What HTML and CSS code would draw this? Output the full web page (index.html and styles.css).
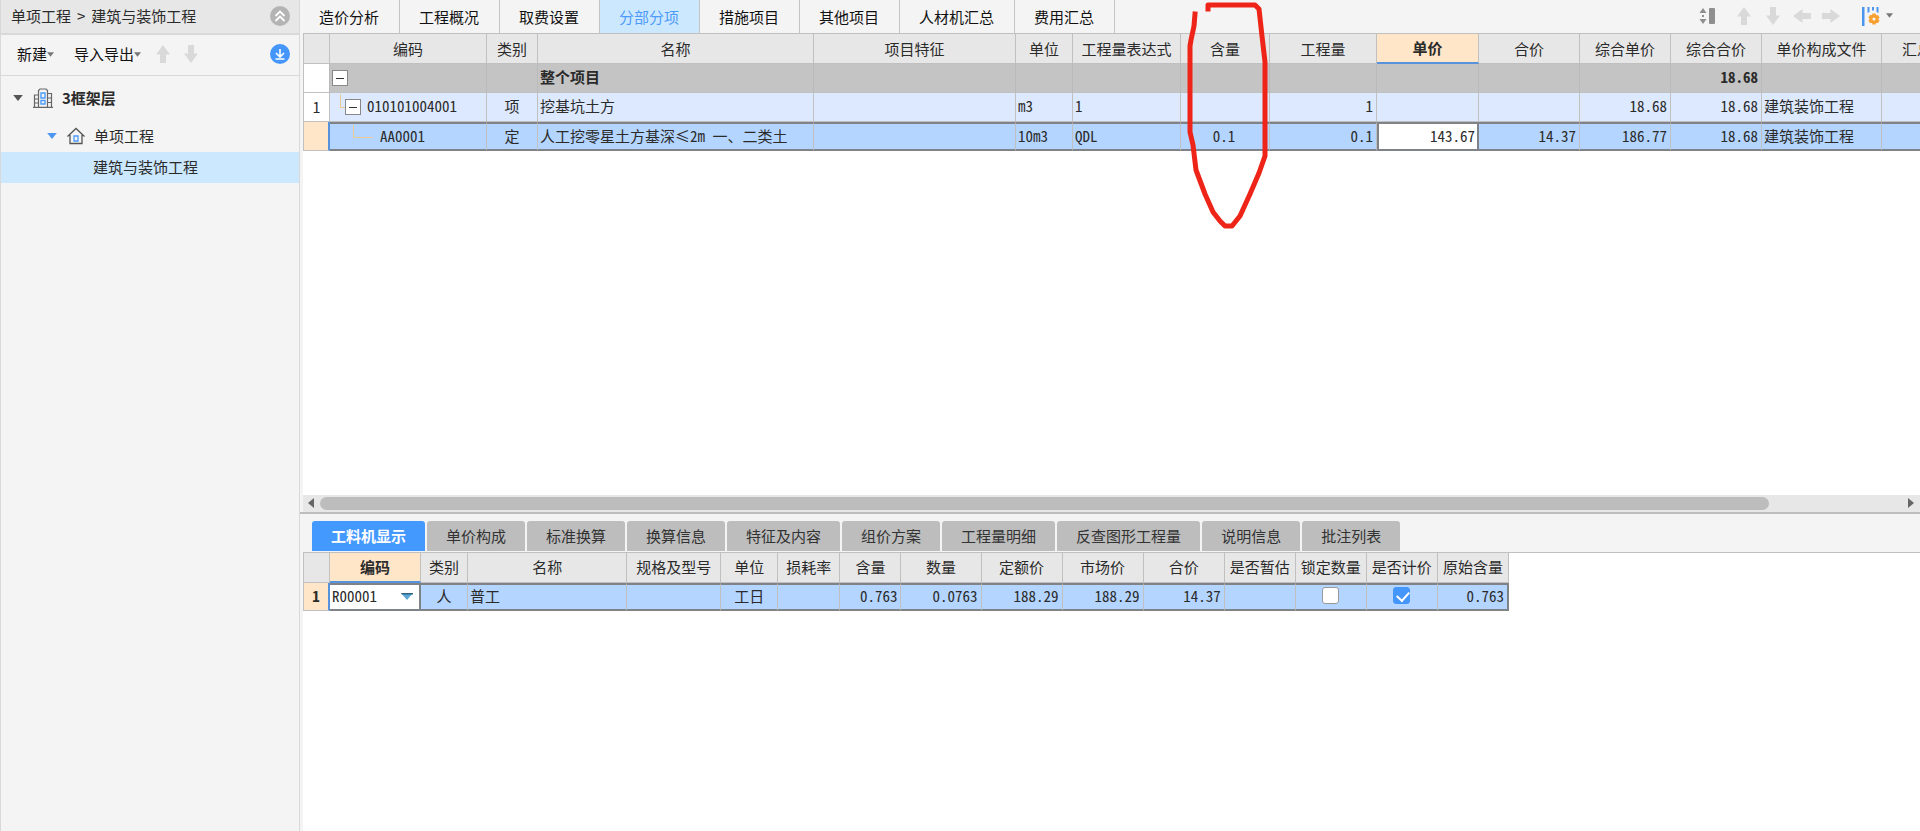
FILE: index.html
```html
<!DOCTYPE html>
<html lang="zh-CN">
<head>
<meta charset="utf-8">
<title>分部分项</title>
<link rel="stylesheet" href="styles.css">
</head>
<body>
<svg class="defs" aria-hidden="true">
  <symbol id="arrow" viewBox="0 0 18 20"><path d="M9 1 L16 10.500 H12 V19 H6 V10.500 H2 Z"/></symbol>
  <symbol id="caret" viewBox="0 0 8 5"><path d="M0 0 H8 L4 5 Z"/></symbol>
</svg>
<div class="app">
  <aside class="side">
    <header class="crumbs">
      <div class="trail"><span>单项工程</span><span>&gt;</span><span>建筑与装饰工程</span></div>
      <button class="plain" aria-label="收起">
        <svg width="20" height="20" viewBox="0 0 20 20"><circle cx="10" cy="10" r="10" fill="#b4b4b4"/><path d="M5.500 10 L10 5.500 L14.500 10 M5.500 15 L10 10.500 L14.500 15" fill="none" stroke="#fff" stroke-width="1.800"/></svg>
      </button>
    </header>
    <div class="tools">
      <button class="plain menu">新建<svg class="tri" width="7" height="5"><use href="#caret"/></svg></button>
      <button class="plain menu">导入导出<svg class="tri" width="7" height="5"><use href="#caret"/></svg></button>
      <button class="plain pale" aria-label="上移"><svg width="18" height="20"><use href="#arrow"/></svg></button>
      <button class="plain pale" aria-label="下移"><svg class="down" width="18" height="20"><use href="#arrow"/></svg></button>
      <button class="plain push" aria-label="下载">
        <svg width="20" height="20" viewBox="0 0 20 20"><circle cx="10" cy="10" r="10" fill="#4496fb"/><path d="M10 5 V13 M6 9 L10 13 L14 9 M5.500 15 H14.500" fill="none" stroke="#fff" stroke-width="1.600"/></svg>
      </button>
    </div>
    <ul class="tree">
      <li class="node root">
        <svg class="dark" width="10" height="6" viewBox="0 0 8 5"><path d="M0 0 H8 L4 5 Z"/></svg>
        <svg width="20" height="20" viewBox="0 0 20 20" fill="none" stroke="#666" stroke-width="1.200"><path d="M0 19.300 H20 M5.500 19 V2.500 L7 1 H13 L14.500 2.500 V19 M5.500 7 H1.500 V19 M14.500 5.500 H18.500 V19 M1.500 11 H5.500 M1.500 15 H5.500 M14.500 10 H18.500 M14.500 14.500 H18.500"/><path d="M8 5 H12 V10 H8 Z M8 12.500 H12 V16 H8 Z" stroke="#4c9bf8" stroke-width="1.400"/></svg>
        <b>3框架层</b>
      </li>
      <li class="node child">
        <svg class="blue" width="10" height="6" viewBox="0 0 8 5"><path d="M0 0 H8 L4 5 Z"/></svg>
        <svg width="18" height="18" viewBox="0 0 18 18" fill="none" stroke="#555" stroke-width="1.300"><path d="M0.500 9.500 L9 1.500 L17.500 9.500 M3 8 V16.500 H15 V8"/><path d="M7 9 H11 V14 H7 Z" stroke="#4c9bf8"/></svg>
        <span>单项工程</span>
      </li>
      <li class="node leaf">建筑与装饰工程</li>
    </ul>
  </aside>

  <main class="main">
    <section class="upper">
      <div class="bar">
        <nav class="tabs">
          <button class="tab">造价分析</button><button class="tab">工程概况</button><button class="tab">取费设置</button><button class="tab on">分部分项</button><button class="tab">措施项目</button><button class="tab">其他项目</button><button class="tab">人材机汇总</button><button class="tab">费用汇总</button>
        </nav>
        <div class="actions">
          <button class="plain rows" aria-label="行高"><svg width="18" height="18" viewBox="0 0 18 18" fill="#8f8f8f"><path d="M0.500 6 L4 1 L7.500 6 Z M0.500 12 L4 17 L7.500 12 Z M3 8 H5 V10 H3 Z"/><rect x="10" y="1" width="6" height="16" rx="1"/></svg></button>
          <button class="plain pale" aria-label="上移"><svg width="18" height="20"><use href="#arrow"/></svg></button>
          <button class="plain pale" aria-label="下移"><svg class="down" width="18" height="20"><use href="#arrow"/></svg></button>
          <button class="plain pale" aria-label="左移"><svg class="left" width="18" height="20"><use href="#arrow"/></svg></button>
          <button class="plain pale" aria-label="右移"><svg class="right" width="18" height="20"><use href="#arrow"/></svg></button>
          <button class="plain menu last" aria-label="列设置"><svg width="18" height="20" viewBox="0 0 18 20"><path d="M0 1 H2.500 V20 H0 Z M5.500 1 H7.500 V6 L5.500 7 Z M10 1 H12 V4.500 H10 Z M14.500 1 H16.500 V7 L14.500 6 Z" fill="#4c96f0"/><g fill="#f8a030"><circle cx="12" cy="13" r="4.600"/><path d="M10.300 7.500 H13.700 V18.500 H10.300 Z"/><path d="M10.300 7.500 H13.700 V18.500 H10.300 Z" transform="rotate(60 12 13)"/><path d="M10.300 7.500 H13.700 V18.500 H10.300 Z" transform="rotate(120 12 13)"/></g><circle cx="12" cy="13" r="1.600" fill="#f4f4f4"/></svg><svg class="tri" width="7" height="5"><use href="#caret"/></svg></button>
        </div>
      </div>
      <div class="sheet">
        <table class="grid wide">
          <colgroup><col class="w26"><col class="w157"><col class="w51"><col class="w276"><col class="w202"><col class="w57"><col class="w108"><col class="w89"><col class="w107"><col class="w102"><col class="w101"><col class="w91"><col class="w91"><col class="w120"><col></colgroup>
          <thead><tr><th></th><th>编码</th><th>类别</th><th>名称</th><th>项目特征</th><th>单位</th><th>工程量表达式</th><th>含量</th><th>工程量</th><th class="hot">单价</th><th>合价</th><th>综合单价</th><th>综合合价</th><th>单价构成文件</th><th>汇总类别</th></tr></thead>
          <tbody>
            <tr class="total"><td class="no"></td><td class="code"><div class="path"><button class="fold" aria-label="折叠"></button></div></td><td></td><td>整个项目</td><td></td><td></td><td></td><td></td><td></td><td></td><td></td><td></td><td class="num">18.68</td><td></td><td></td></tr>
            <tr class="item"><td class="no">1</td><td class="code"><div class="path"><i class="elbow"></i><button class="fold" aria-label="折叠"></button><span>010101004001</span></div></td><td class="mid">项</td><td>挖基坑土方</td><td></td><td>m3</td><td>1</td><td></td><td class="num">1</td><td></td><td></td><td class="num">18.68</td><td class="num">18.68</td><td>建筑装饰工程</td><td></td></tr>
            <tr class="pick"><td class="no"></td><td class="code"><div class="path"><i class="elbow deep"></i><span>AA0001</span></div></td><td class="mid">定</td><td>人工挖零星土方基深≤2m 一、二类土</td><td></td><td>10m3</td><td>QDL</td><td class="mid shift">0.1</td><td class="num">0.1</td><td class="edit"><input class="price" aria-label="单价" value="143.67"></td><td class="num">14.37</td><td class="num">186.77</td><td class="num">18.68</td><td>建筑装饰工程</td><td></td></tr>
          </tbody>
        </table>
      </div>
      <div class="scroll">
        <svg width="6" height="10" viewBox="0 0 6 10"><path d="M6 0 V10 L0 5 Z"/></svg>
        <div class="track"><div class="thumb"></div></div>
        <svg width="6" height="10" viewBox="0 0 6 10"><path d="M0 0 V10 L6 5 Z"/></svg>
      </div>
    </section>

    <section class="lower">
      <nav class="chips">
        <button class="chip on">工料机显示</button><button class="chip">单价构成</button><button class="chip">标准换算</button><button class="chip">换算信息</button><button class="chip">特征及内容</button><button class="chip">组价方案</button><button class="chip">工程量明细</button><button class="chip">反查图形工程量</button><button class="chip">说明信息</button><button class="chip">批注列表</button>
      </nav>
      <div class="sheet">
        <table class="grid detail">
          <colgroup><col class="w26"><col class="w91"><col class="w47"><col class="w159"><col class="w94"><col class="w57"><col class="w62"><col class="w61"><col class="w80"><col class="w81"><col class="w81"><col class="w81"><col class="w71"><col class="w71"><col class="w71"><col class="w71"></colgroup>
          <thead><tr><th></th><th class="hot">编码</th><th>类别</th><th>名称</th><th>规格及型号</th><th>单位</th><th>损耗率</th><th>含量</th><th>数量</th><th>定额价</th><th>市场价</th><th>合价</th><th>是否暂估</th><th>锁定数量</th><th>是否计价</th><th>原始含量</th></tr></thead>
          <tbody>
            <tr class="pick"><td class="no">1</td><td class="edit"><div class="combo"><select aria-label="编码"><option>R00001</option></select><svg width="12" height="7" viewBox="0 0 12 7"><path d="M0 0 H12 L6 7 Z" fill="#5ba7d8"/><path d="M0 0 H12 V1.500 H1 Z" fill="#2f6487"/></svg></div></td><td class="mid">人</td><td>普工</td><td></td><td class="mid">工日</td><td></td><td class="num">0.763</td><td class="num">0.0763</td><td class="num">188.29</td><td class="num">188.29</td><td class="num">14.37</td><td></td><td class="mid"><input type="checkbox" class="tick" aria-label="锁定数量"></td><td class="mid"><input type="checkbox" class="tick" aria-label="是否计价" checked></td><td class="num end">0.763</td></tr>
          </tbody>
        </table>
      </div>
    </section>
  </main>
</div>
<svg class="mark" width="84" height="232" viewBox="0 0 84 232" aria-hidden="true"><path d="M15 14 L14 26 L11 40 L10 46 V132 L13 145 L16 170 L25 194 L33 212 L40 221 L45 226 H52 L60 216 L70 194 L79 173 L85 156 V62 L82 36 L79 9 L75 5 H28 V9"/></svg>
</body>
</html>
```

FILE: styles.css
```css
* { box-sizing: border-box; }
body {
  margin: 0;
  background: #f4f4f4;
  color: #2b2b2b;
  font: 15px/20px "Noto Sans CJK SC", sans-serif;
  overflow: hidden;
}
button, input, select { font: inherit; color: inherit; margin: 0; }
svg { display: block; }
.defs { position: absolute; width: 0; height: 0; }
.app { display: flex; height: 100vh; }
.plain { border: 0; padding: 0; background: none; display: flex; align-items: center; }

/* sidebar */
.side { flex: 0 0 300px; border: solid #d9d9d9; border-width: 0 1px; }
.crumbs {
  display: flex; align-items: center; justify-content: space-between;
  height: 35px; padding: 0 9px 1px 10px;
  background: #e7e7e7; border-bottom: 2px solid #d9d9d9;
}
.trail { display: flex; gap: 6px; }
.tools { display: flex; align-items: center; height: 41px; padding: 0 9px 2px 16px; border-bottom: 1px solid #d9d9d9; color: #111; }
.menu { gap: 0; margin-right: 20px; }
.tools .pale { margin-right: 10px; }
.tools .menu + .menu { margin-right: 13px; }
.tri { fill: #777; }
.pale { fill: #d9d9d9; }
.push { margin-left: auto; }
.down { transform: rotate(180deg); }
.left { transform: rotate(-90deg); }
.right { transform: rotate(90deg); }
.tree { list-style: none; margin: 0; padding: 0; }
.node { display: flex; align-items: center; height: 31px; padding-bottom: 2px; }
.root { height: 45px; padding-left: 12px; gap: 9px; }
.root svg + svg { margin-left: 1px; }
.child { padding-left: 46px; gap: 9px; }
.child svg + svg { margin-left: 1px; }
.leaf { padding-left: 92px; background: #cce8ff; }
.dark { fill: #555; }
.blue { fill: #4c96f0; }

/* main area */
.main { flex: 1; min-width: 0; display: flex; flex-direction: column; }
.upper { flex: 513 1 0; display: flex; flex-direction: column; min-height: 0; border-bottom: 2px solid #bdbdbd; }
.lower { flex: 318 1 0; display: flex; flex-direction: column; min-height: 0; }
.bar { display: flex; justify-content: space-between; height: 33px; }
.tabs { display: flex; }
.tab { border: 0; border-right: 1px solid #c4c4c4; padding: 0 20px 0 19px; background: none; color: #111; }
.tab.on { background: #cce8ff; color: #4c9bf8; }
.actions { display: flex; align-items: center; gap: 11px; padding: 0 27px 2px 0; }
.actions .rows { margin-right: 7px; }
.actions .last { margin: 0 0 0 11px; gap: 6px; }
.sheet { flex: 1; min-height: 0; margin-left: 3px; background: #fff; border-top: 1px solid #c0c0c0; overflow: hidden; }
.scroll { display: flex; align-items: center; gap: 6px; height: 17px; margin-left: 3px; padding: 0 6px 0 5px; background: #e7e7e7; fill: #666; }
.track { flex: 1; }
.thumb { width: 91.6%; height: 13px; border-radius: 7px; background: #bdbdbd; }

/* grids */
.grid { table-layout: fixed; border-collapse: separate; border-spacing: 0; border-left: 1px solid #c0c0c0; }
.wide { width: 1680px; }
.detail { width: 1206px; }
.w26 { width: 26px; }
.w47 { width: 47px; }
.w51 { width: 51px; }
.w57 { width: 57px; }
.w61 { width: 61px; }
.w62 { width: 62px; }
.w71 { width: 71px; }
.w80 { width: 80px; }
.w81 { width: 81px; }
.w89 { width: 89px; }
.w91 { width: 91px; }
.w94 { width: 94px; }
.w101 { width: 101px; }
.w102 { width: 102px; }
.w107 { width: 107px; }
.w108 { width: 108px; }
.w120 { width: 120px; }
.w157 { width: 157px; }
.w159 { width: 159px; }
.w202 { width: 202px; }
.w276 { width: 276px; }
.grid th, .grid td { padding: 0 2px; white-space: nowrap; overflow: hidden; border: solid #c0c0c0; border-width: 0 1px 1px 0; }
.grid th { height: 30px; font-weight: 400; background: #e7e7e7; }
.grid th.hot { font-weight: 700; background: #ffe6c8; border-bottom: 2px solid #5793dc; }
.grid td { height: 29px; padding-bottom: 2px; font-family: "Noto Sans Mono CJK SC", "Liberation Mono", "Noto Sans CJK SC", monospace; }
.grid td.no { text-align: center; background: #fff; padding-bottom: 0; }
.grid td.mid { text-align: center; }
.grid td.shift { padding-right: 4px; }
.grid td.num { text-align: right; padding-right: 3px; }
.grid td.code { padding: 0; }
.total td { background: #c4c4c4; font-weight: 700; border-right-color: #bababa; }
.item td { background: #dde9fe; }
.grid .pick td { background: #b4d5ff; border-top: 2px solid #7f8286; border-bottom: 2px solid #7f8286; }
.grid .pick td.no { background: #ffe6c8; border-top: 0; border-bottom: 1px solid #c0c0c0; border-right: 2px solid #5793dc; font-weight: 700; }
.grid .pick td.edit { padding: 0; background: #fff; border-right: 2px solid #7f8286; }
.grid .pick td.end { border-right: 2px solid #7f8286; }
.wide .pick td.edit { border-left: 2px solid #7f8286; }
.detail .pick td { height: 28px; }
.path { display: flex; align-items: center; height: 25px; padding-left: 2px; }
.fold {
  flex: none; width: 16px; height: 16px; padding: 0; border: 1px solid #888;
  background: linear-gradient(#333, #333) center / 8px 1px no-repeat #fff;
}
.fold + span { margin: 0 0 2px 6px; }
.elbow { flex: none; width: 5px; height: 14px; margin: 0 0 12px 8px; border: solid #ecc995; border-width: 0 0 1px 1px; }
.elbow.deep { width: 20px; height: 13px; margin: 0 7px 11px 21px; }
.elbow.deep + span { margin-bottom: 2px; }
.price { display: block; width: 100%; height: 24px; border: 0; padding: 0 2px 2px; background: #fff; text-align: right; }
.combo { display: flex; align-items: center; padding-right: 6px; }
.combo select { flex: 1; min-width: 0; height: 24px; border: 0; padding: 0 2px 2px; background: #fff; appearance: none; }
.tick { appearance: none; display: block; width: 17px; height: 17px; margin: 0 auto; border: 1px solid #999; border-radius: 3px; background: #fff; }
.tick:checked { background: #4496fb; border-color: #4496fb; }
.tick:checked::after { content: ""; display: block; width: 6px; height: 10px; margin: 1px 0 0 5px; border: solid #fff; border-width: 0 2px 2px 0; transform: rotate(42deg); }

/* lower tabs */
.chips { display: flex; gap: 2px; height: 38px; padding: 7px 0 1px 12px; }
.chip { border: 0; border-radius: 3px 3px 0 0; padding: 0 19px; background: #bdbdbd; color: #333; }
.chip.on { background: #4499ff; color: #fff; font-weight: 700; }

/* hand-drawn ring over the quantity column */
.mark { position: absolute; left: 1180px; top: 0; overflow: visible; pointer-events: none; }
.mark path { fill: none; stroke: #ef2418; stroke-width: 5px; stroke-linejoin: round; stroke-linecap: square; }
```
